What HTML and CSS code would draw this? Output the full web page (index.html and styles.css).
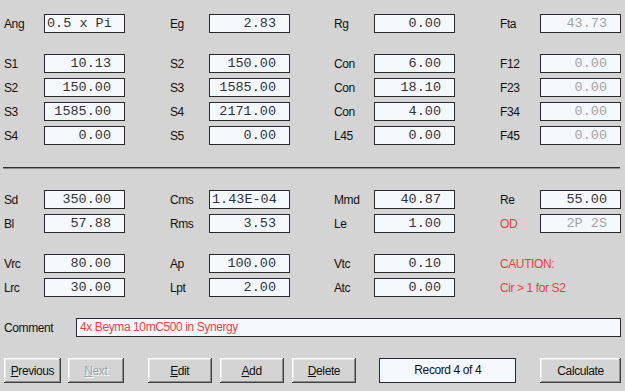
FILE: index.html
```html
<!DOCTYPE html>
<html lang="en">
<head>
  <meta charset="UTF-8" /><meta name="viewport" content="width=device-width, initial-scale=1.0"/>
  <title>Box Calculator</title>
  <link rel="stylesheet" href="styles.css">
</head>
<body>
  <div class="form">
    <div class="row">
      <span class="lbl">Ang</span><div class="box left">0.5 x Pi</div>
      <span class="lbl">Eg</span><div class="box">2.83</div>
      <span class="lbl">Rg</span><div class="box">0.00</div>
      <span class="lbl">Fta</span><div class="box off">43.73</div>
    </div>

    <div class="row spaced">
      <span class="lbl">S1</span><div class="box">10.13</div>
      <span class="lbl">S2</span><div class="box">150.00</div>
      <span class="lbl">Con</span><div class="box">6.00</div>
      <span class="lbl">F12</span><div class="box off">0.00</div>
    </div>
    <div class="row">
      <span class="lbl">S2</span><div class="box">150.00</div>
      <span class="lbl">S3</span><div class="box">1585.00</div>
      <span class="lbl">Con</span><div class="box">18.10</div>
      <span class="lbl">F23</span><div class="box off">0.00</div>
    </div>
    <div class="row">
      <span class="lbl">S3</span><div class="box">1585.00</div>
      <span class="lbl">S4</span><div class="box">2171.00</div>
      <span class="lbl">Con</span><div class="box">4.00</div>
      <span class="lbl">F34</span><div class="box off">0.00</div>
    </div>
    <div class="row">
      <span class="lbl">S4</span><div class="box">0.00</div>
      <span class="lbl">S5</span><div class="box">0.00</div>
      <span class="lbl">L45</span><div class="box">0.00</div>
      <span class="lbl">F45</span><div class="box off">0.00</div>
    </div>

    <div class="rule"></div>

    <div class="row after-rule">
      <span class="lbl">Sd</span><div class="box">350.00</div>
      <span class="lbl">Cms</span><div class="box left">1.43E-04</div>
      <span class="lbl">Mmd</span><div class="box">40.87</div>
      <span class="lbl">Re</span><div class="box">55.00</div>
    </div>
    <div class="row">
      <span class="lbl">Bl</span><div class="box">57.88</div>
      <span class="lbl">Rms</span><div class="box">3.53</div>
      <span class="lbl">Le</span><div class="box">1.00</div>
      <span class="lbl warn">OD</span><div class="box off">2P 2S</div>
    </div>

    <div class="row spaced">
      <span class="lbl">Vrc</span><div class="box">80.00</div>
      <span class="lbl">Ap</span><div class="box">100.00</div>
      <span class="lbl">Vtc</span><div class="box">0.10</div>
      <span class="lbl warn wide">CAUTION:</span>
    </div>
    <div class="row">
      <span class="lbl">Lrc</span><div class="box">30.00</div>
      <span class="lbl">Lpt</span><div class="box">2.00</div>
      <span class="lbl">Atc</span><div class="box">0.00</div>
      <span class="lbl warn wide">Cir &gt; 1 for S2</span>
    </div>

    <div class="comment-row">
      <span class="lbl">Comment</span>
      <div class="comment">4x Beyma 10mC500 in Synergy</div>
    </div>

    <div class="buttons">
      <button class="btn w57"><u>P</u>revious</button>
      <button class="btn w56 disabled" disabled><u>N</u>ext</button>
      <button class="btn w64 group"><u>E</u>dit</button>
      <button class="btn w64"><u>A</u>dd</button>
      <button class="btn w65"><u>D</u>elete</button>
      <div class="record">Record 4 of 4</div>
      <button class="btn w81 group">Calculate</button>
    </div>
  </div>
</body>
</html>
```

FILE: styles.css
```css
* { box-sizing: border-box; margin: 0; padding: 0; }

html, body {
  width: 625px;
  height: 391px;
  overflow: hidden;
}

body {
  background: #d4d4d4;
  color: #111;
  font-family: 'Liberation Sans', Arial, sans-serif;
  font-size: 12px;
  letter-spacing: -0.4px;
}

.form {
  padding: 14px 4px 0 4px;
}

.row {
  display: grid;
  grid-template-columns: 40px 126px 39px 125px 40px 126px 40px 81px;
  align-items: center;
  height: 19px;
  margin-top: 5px;
}

.row:first-child { margin-top: 0; }
.row.spaced { margin-top: 21px; }
.row.after-rule { margin-top: 22px; }

.lbl {
  white-space: nowrap;
}

.lbl.warn { color: #f0403a; }
.lbl.wide { grid-column: span 2; }

.box {
  width: 81px;
  height: 19px;
  background: #f5f9ff;
  border: 1px solid #2a2a2a;
  font-family: 'Liberation Mono', 'Courier New', monospace;
  font-size: 13.5px;
  letter-spacing: 0;
  line-height: 17px;
  text-align: right;
  padding: 0 13px 0 3px;
  color: #333;
  white-space: pre;
  overflow: hidden;
}

.box.left { text-align: left; padding-left: 2px; }
.box.off { color: #a4a4a4; }

.rule {
  height: 1px;
  background: #2e2e2e;
  box-shadow: 0 1px 0 #8a8a8a;
  margin: 22px 1px 0 -1px;
}

.comment-row {
  display: flex;
  align-items: center;
  height: 19px;
  margin-top: 21px;
}

.comment-row .lbl { width: 72px; }

.comment {
  width: 545px;
  height: 19px;
  background: #f5f9ff;
  border: 1px solid #2a2a2a;
  color: #f0403a;
  line-height: 17px;
  padding-left: 3px;
}

.buttons {
  display: flex;
  align-items: center;
  gap: 7px;
  margin-top: 21px;
  height: 25px;
}

.btn {
  height: 25px;
  background: #d4d4d4;
  border: none;
  font-family: inherit;
  font-size: inherit;
  letter-spacing: inherit;
  color: #111;
  box-shadow:
    inset -1px -1px 0 #404040,
    inset 1px 1px 0 #ffffff,
    inset -2px -2px 0 #8c8c8c,
    inset 2px 2px 0 #e6e6e6;
}

.btn.disabled {
  color: #a2a2a2;
  text-shadow: 1px 1px 0 #ffffff;
}

.btn.group { margin-left: 17px; }
.btn.w57 { width: 57px; }
.btn.w56 { width: 56px; }
.btn.w64 { width: 64px; margin-right: 1px; }
.btn.w65 { width: 65px; }
.btn.w81 { width: 81px; }

.record {
  width: 137px;
  height: 25px;
  margin-left: 16px;
  background: #f5f9ff;
  border: 1px solid #2a2a2a;
  text-align: center;
  line-height: 23px;
}
```
